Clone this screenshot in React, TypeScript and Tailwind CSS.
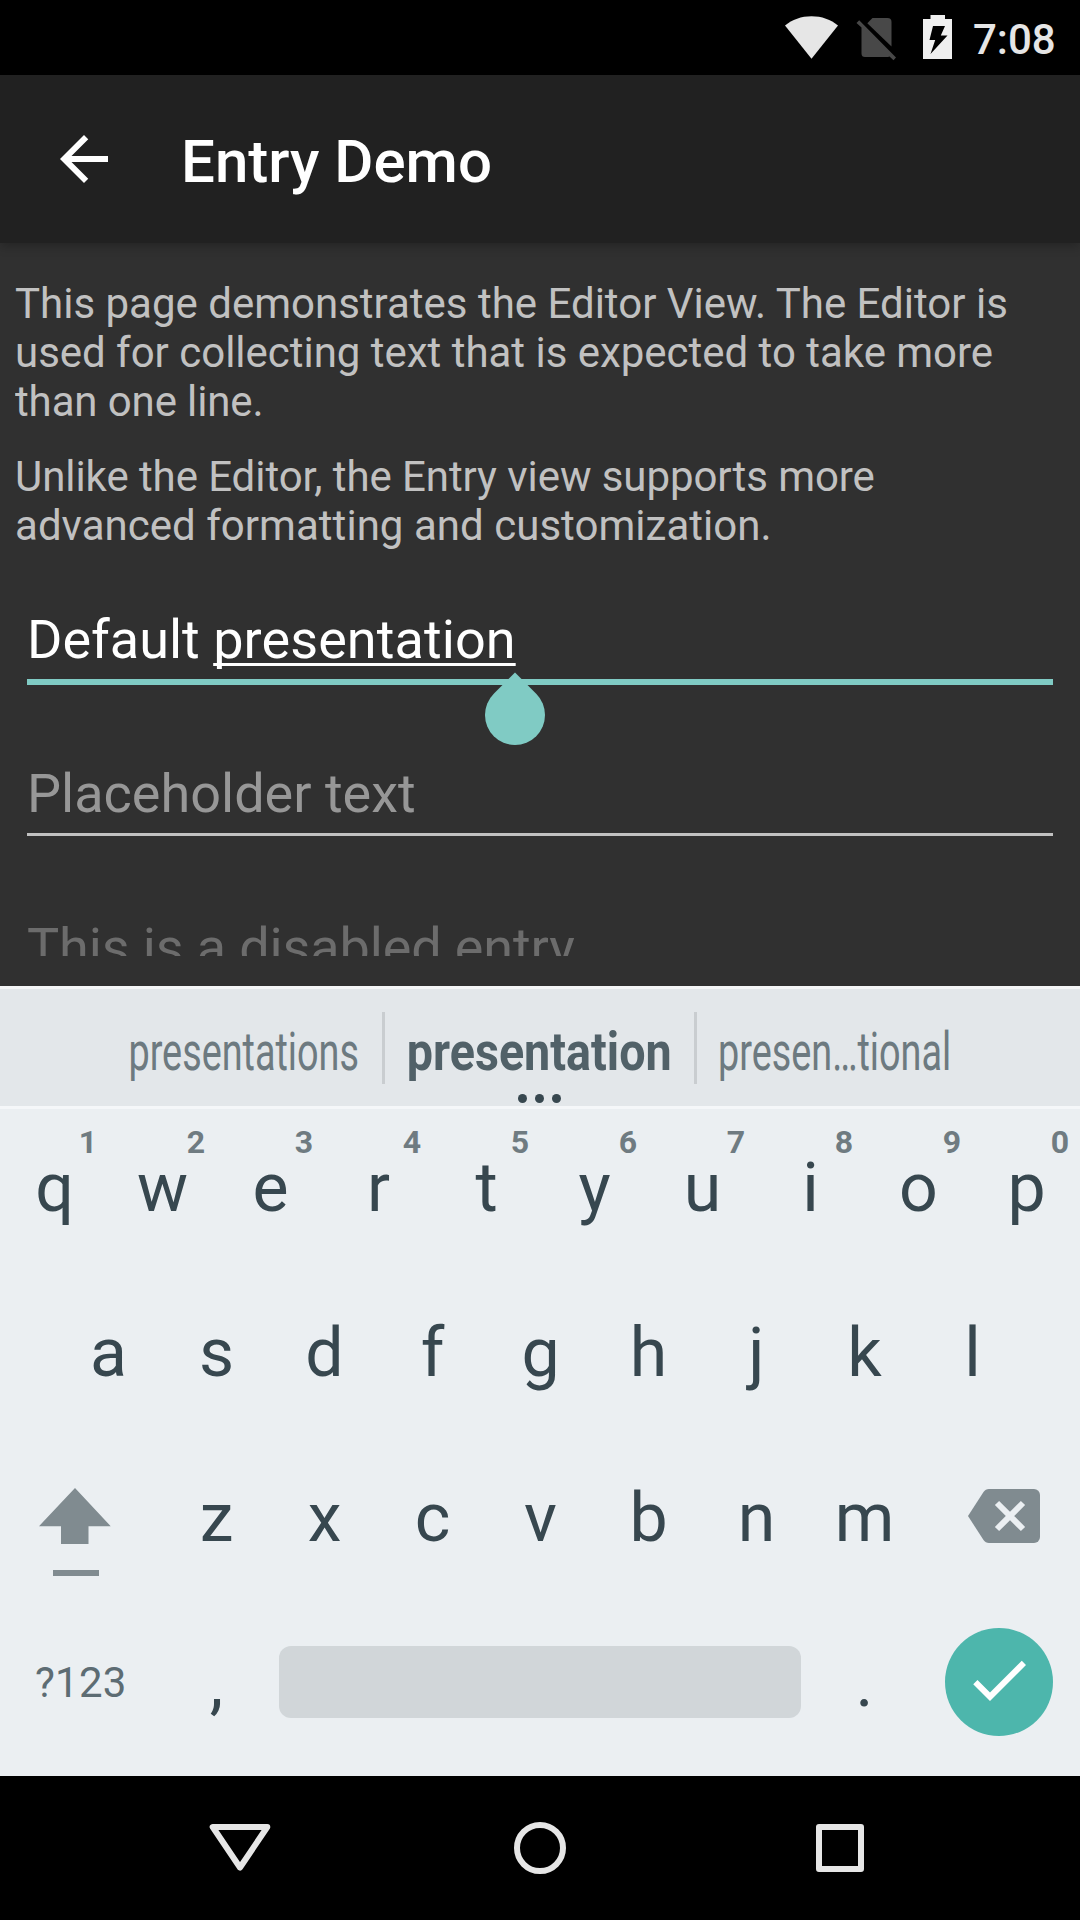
import React from "react";

const topRow = ["q", "w", "e", "r", "t", "y", "u", "i", "o", "p"];
const hints = ["1", "2", "3", "4", "5", "6", "7", "8", "9", "0"];
const homeRow = ["a", "s", "d", "f", "g", "h", "j", "k", "l"];
const bottomRow = ["z", "x", "c", "v", "b", "n", "m"];

function StatusBar() {
  return (
    <div className="flex h-[75px] shrink-0 items-start bg-black pl-[785px]">
      <svg className="mt-[16px] h-[43px] w-[53px]" viewBox="0 0 53 43" fill="#e6e6e6">
        <path d="M0 9.5C7 3.5 16.500 0.200 26.500 0.200S46 3.500 53 9.500L26.500 42.700Z" />
      </svg>
      <svg className="mt-[18px] ml-[18px] h-[43px] w-[41px]" viewBox="0 0 41 43" fill="#484848">
        <path d="M16.500 0H31.500a4 4 0 0 1 4 4V28.500L11.300 5.300Z" />
        <path d="M3.200 2.300L40 39.500L37.500 42.200L33.500 38.500L32 39H9a3.500 3.500 0 0 1-3.500-3.500V9.500L0.500 5Z" />
      </svg>
      <svg className="mt-[15px] ml-[26px] h-[44px] w-[29px]" viewBox="0 0 29 44">
        <path fill="#efefef" d="M7.500 0H22V4H29V44H0V4H7.500Z" />
        <path fill="#000" d="M10 11H22L17.800 20.500H24.500L7.500 39L12.200 25H6.500Z" />
      </svg>
      <span className="mt-[15px] ml-[21px] text-[42px] leading-[49px] font-medium text-[#e6e6e6]">7:08</span>
    </div>
  );
}

function AppBar() {
  return (
    <div className="relative flex h-[168px] shrink-0 items-center bg-[#212121] pl-[48px] shadow-[0_3px_10px_rgba(0,0,0,0.25)]">
      <svg className="h-[72px] w-[72px]" viewBox="0 0 24 24" fill="#fff">
        <path d="M20 11H7.830l5.590-5.590L12 4l-8 8 8 8 1.410-1.410L7.830 13H20z" />
      </svg>
      <h1 className="mt-[6px] ml-[61px] text-[60px] leading-[70px] font-medium text-white">Entry Demo</h1>
    </div>
  );
}

function Content() {
  return (
    <div className="h-[743px] shrink-0 px-[15px] pt-[36px] pb-[30px] text-[#c1c1c1]">
      <div className="h-full overflow-hidden">
        <p className="text-[42px] leading-[49px] whitespace-nowrap">
          This page demonstrates the Editor View. The Editor is<br />
          <span className="tracking-[-0.02px]">used for collecting text that is expected to take more</span><br />
          <span className="tracking-[-0.12px]">than one line.</span>
        </p>
        <p className="mt-[26px] text-[42px] leading-[49px] whitespace-nowrap">
          <span className="tracking-[-0.07px]">Unlike the Editor, the Entry view supports more</span><br />
          <span className="tracking-[0.03px]">advanced formatting and customization.</span>
        </p>
        <div className="mx-[12px] mt-[58px] text-[54px] leading-[63px]">
          <div className="relative h-[154px]">
            <div className="h-[77px] border-b-[6px] border-[#80cbc4] whitespace-pre text-white">
              Default <span className="tracking-[0.08px] underline decoration-[3px] underline-offset-[5px] [text-decoration-skip-ink:none]">presentation</span>
            </div>
            <div className="absolute top-[77px] left-[458px] h-[60px] w-[60px] rotate-45 rounded-full rounded-tl-[4px] bg-[#80cbc4]" />
          </div>
          <div className="h-[154px]">
            <div className="h-[74px] border-b-[3px] border-[#c1c1c1] text-[#979797]">Placeholder text</div>
          </div>
          <div className="tracking-[-0.13px] text-[#6c6c6c]">This is a disabled entry</div>
        </div>
      </div>
    </div>
  );
}

function Suggestions() {
  return (
    <div className="relative flex h-[123px] shrink-0 border-y-[3px] border-t-[#f4f5f6] border-b-[#f5f7f9] bg-[#e3e7ea] pt-[23px] pl-[106px] text-[54px] leading-[63px] whitespace-nowrap text-[#6d7a80]">
      <div className="flex h-[72px] w-[276px] justify-center pt-[8px]">
        <span className="origin-center scale-x-[0.7]">presentations</span>
      </div>
      <div className="flex h-[72px] w-[315px] justify-center border-x-[3px] border-[#c9cdd0] pt-[8px] font-bold text-[#516168]">
        <span className="origin-center scale-x-[0.864]">presentation</span>
      </div>
      <div className="flex h-[72px] w-[276px] justify-center pt-[8px]">
        <span className="origin-center scale-x-[0.7]">presen…tional</span>
      </div>
      <div className="absolute top-[104.500px] left-[517.500px] flex gap-[8px]">
        <i className="h-[9px] w-[9px] rounded-full bg-[#37474f]" />
        <i className="h-[9px] w-[9px] rounded-full bg-[#37474f]" />
        <i className="h-[9px] w-[9px] rounded-full bg-[#37474f]" />
      </div>
    </div>
  );
}

function Key({ label, hint }: { label: string; hint?: string }) {
  return (
    <div className="relative h-[165px] w-[108px] shrink-0 pt-[39px] pl-px text-center text-[68px] leading-[80px] text-[#37474f]">
      {label}
      {hint && (
        <span className="absolute top-[14px] right-0 w-[40px] text-center text-[32px] leading-[38px] font-bold text-[#6f7b81]">
          {hint}
        </span>
      )}
    </div>
  );
}

function Keyboard() {
  return (
    <div className="h-[667px] shrink-0 bg-[#ebeff2]">
      <div className="flex">
        {topRow.map((k, i) => (
          <Key key={k} label={k} hint={hints[i]} />
        ))}
      </div>
      <div className="flex justify-center">
        {homeRow.map((k) => (
          <Key key={k} label={k} />
        ))}
      </div>
      <div className="flex">
        <div className="h-[165px] w-[162px] pt-[49px] pl-[39px]">
          <svg className="h-[88px] w-[72px]" viewBox="0 0 72 88" fill="#808b90">
            <path d="M36 0L71.700 38.200H49.500V56H22V38.200H0Z" />
            <path d="M14 82H60V88H14Z" />
          </svg>
        </div>
        {bottomRow.map((k) => (
          <Key key={k} label={k} />
        ))}
        <div className="h-[165px] w-[162px] pt-[50px] pl-[50px]">
          <svg className="h-[54px] w-[72px]" viewBox="0 0 72 54">
            <path fill="#808b90" d="M21 0H66a6 6 0 0 1 6 6V48a6 6 0 0 1-6 6H21q-3.500 0-5.500-3L0 27L15.500 3Q17.500 0 21 0Z" />
            <path stroke="#ebeff2" strokeWidth="6" d="M29 14L55 40M55 14L29 40" />
          </svg>
        </div>
      </div>
      <div className="flex">
        <div className="h-[165px] w-[162px] pt-[54px] text-[42px] leading-[49px] text-[#5d6c73]">
          <span className="ml-[35px] tracking-[0.25px]">?123</span>
        </div>
        <Key label="," />
        <div className="h-[165px] w-[540px] px-[9px] pt-[42px]">
          <div className="h-[72px] rounded-[12px] bg-[#d1d6d9]" />
        </div>
        <Key label="." />
        <div className="h-[165px] w-[162px] pt-[24px] pl-[27px]">
          <div className="flex h-[108px] w-[108px] justify-center rounded-full bg-[#4db6ac] pt-[16px]">
            <svg className="h-[72px] w-[72px]" viewBox="0 0 24 24" fill="#fff">
              <path d="M9 16.170L4.830 12l-1.420 1.410L9 19 21 7l-1.410-1.410z" />
            </svg>
          </div>
        </div>
      </div>
    </div>
  );
}

function NavBar() {
  return (
    <div className="flex h-[144px] shrink-0 items-center justify-center gap-[240px] bg-black">
      <svg className="h-[60px] w-[60px] overflow-visible" viewBox="0 0 60 60" fill="none" stroke="#e6e6e6" strokeWidth="6" strokeLinejoin="round">
        <path d="M2.700 9H57.300L30 49.500Z" />
      </svg>
      <svg className="h-[60px] w-[60px]" viewBox="0 0 60 60" fill="none" stroke="#e6e6e6" strokeWidth="6">
        <circle cx="30" cy="30" r="23" />
      </svg>
      <svg className="h-[60px] w-[60px]" viewBox="0 0 60 60" fill="none" stroke="#e6e6e6" strokeWidth="6" strokeLinejoin="round">
        <path d="M9 9H51V51H9Z" />
      </svg>
    </div>
  );
}

export default function App() {
  return (
    <div className="flex h-[1920px] w-[1080px] flex-col overflow-hidden bg-[#303030] font-[Roboto,sans-serif]">
      <StatusBar />
      <AppBar />
      <Content />
      <Suggestions />
      <Keyboard />
      <NavBar />
    </div>
  );
}
